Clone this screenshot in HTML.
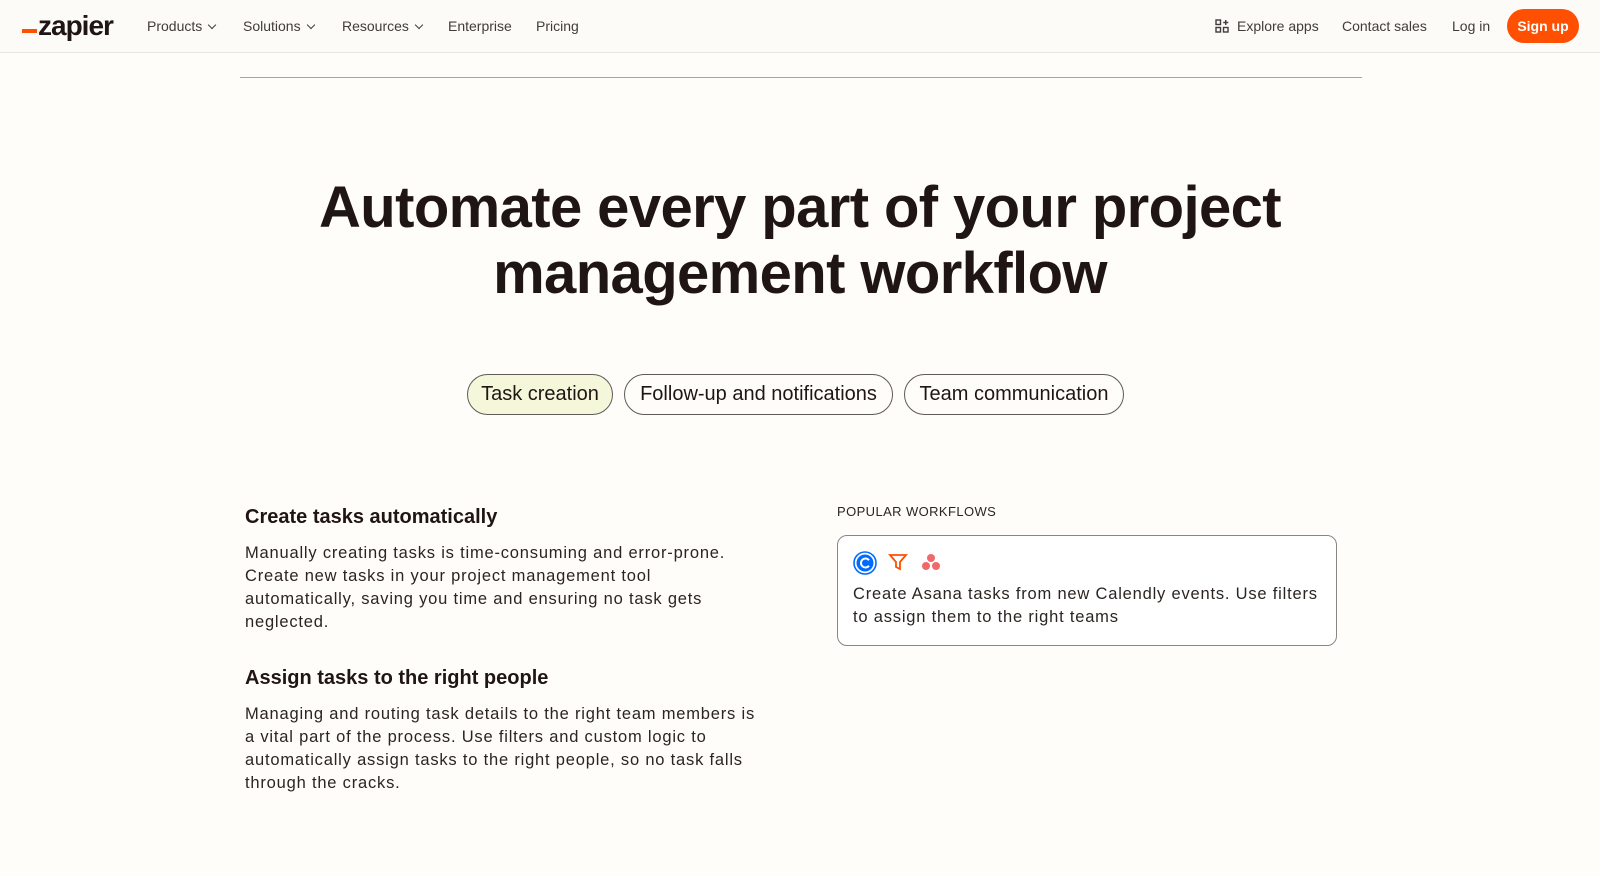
<!DOCTYPE html>
<html><head><meta charset="utf-8"><style>
*{margin:0;padding:0;box-sizing:border-box}
body{width:1600px;height:876px;background:#fffdf9;font-family:"Liberation Sans",Arial,sans-serif;color:#201515;position:relative;overflow:hidden}
.nav{position:absolute;left:0;top:0;width:1600px;height:53px;background:#fcfbf8;border-bottom:1px solid #e8e6e1}
.a{position:absolute;top:18px;font-size:14px;color:#403c3a}
.logo{position:absolute;left:22px;top:10px;font-size:28px;font-weight:bold;letter-spacing:-1px;color:#201515}
.logo span{display:inline-block;width:15px;height:4px;background:#ff4f00;vertical-align:2px;margin-right:1px}
.chev{display:inline-block;width:6px;height:6px;border-right:1.3px solid #403c3a;border-bottom:1.3px solid #403c3a;transform:rotate(45deg);margin-left:7px;vertical-align:3px}
.sign{position:absolute;left:1507px;top:9px;width:72px;height:34px;border-radius:17px;background:#ff4f00;color:#fff;font-weight:bold;font-size:14px;text-align:center;line-height:34px}
.hr{position:absolute;left:240px;top:77px;width:1122px;border-top:1.5px solid #a8a5a0}
h1{position:absolute;left:0;top:175px;width:1600px;text-align:center;font-size:58px;font-weight:bold;line-height:66px;letter-spacing:-0.6px;color:#201515}
.pill{position:absolute;top:374px;height:41px;border:1px solid #5e5a57;border-radius:21px;font-size:20px;line-height:39px;text-align:center;color:#201515}
h3{position:absolute;left:245px;font-size:20px;font-weight:bold;color:#201515}
p.t{position:absolute;left:245px;font-size:16.5px;line-height:23px;color:#2b2522;letter-spacing:.8px;white-space:nowrap}
.card{position:absolute;left:837px;top:535px;width:500px;height:111px;border:1px solid #8a8682;border-radius:10px;background:#fff}
</style></head><body>
<div class="nav">
<div class="logo"><span></span>zapier</div>
<div class="a" style="left:147px">Products<i class="chev"></i></div>
<div class="a" style="left:243px">Solutions<i class="chev"></i></div>
<div class="a" style="left:342px">Resources<i class="chev"></i></div>
<div class="a" style="left:448px">Enterprise</div>
<div class="a" style="left:536px">Pricing</div>
<svg style="position:absolute;left:1215px;top:19px" width="14" height="14" viewBox="0 0 14 14" fill="none" stroke="#403c3a" stroke-width="1.4"><rect x="1" y="1" width="4.5" height="4.5"/><rect x="1" y="8.5" width="4.5" height="4.5"/><rect x="8.5" y="8.5" width="4.5" height="4.5"/><path d="M10.75 1v5M8.25 3.5h5"/></svg>
<div class="a" style="left:1237px">Explore apps</div>
<div class="a" style="left:1342px">Contact sales</div>
<div class="a" style="left:1452px">Log in</div>
<div class="sign">Sign up</div>
</div>
<div class="hr"></div>
<h1>Automate every part of your project<br>management workflow</h1>
<div class="pill" style="left:467px;width:146px;background:#f4f7d9">Task creation</div>
<div class="pill" style="left:624px;width:269px">Follow-up and notifications</div>
<div class="pill" style="left:904px;width:220px">Team communication</div>
<h3 style="top:506px">Create tasks automatically</h3>
<p class="t" style="top:542px">Manually creating tasks is time-consuming and error-prone.<br>Create new tasks in your project management tool<br>automatically, saving you time and ensuring no task gets<br>neglected.</p>
<h3 style="top:667px">Assign tasks to the right people</h3>
<p class="t" style="top:703px">Managing and routing task details to the right team members is<br>a vital part of the process. Use filters and custom logic to<br>automatically assign tasks to the right people, so no task falls<br>through the cracks.</p>
<div style="position:absolute;left:837px;top:504px;font-size:13px;letter-spacing:.4px;color:#2b2522">POPULAR WORKFLOWS</div>
<div class="card">
<svg style="position:absolute;left:15px;top:15px" width="24" height="24" viewBox="0 0 24 24"><circle cx="12" cy="12" r="11" fill="none" stroke="#006bff" stroke-width="1.6"/><circle cx="12" cy="12" r="8.5" fill="#006bff"/><path d="M16 9.2A4.5 4.5 0 1 0 16 14.8" fill="none" stroke="#fff" stroke-width="2"/></svg>
<svg style="position:absolute;left:50px;top:16px" width="20" height="20" viewBox="0 0 20 20" fill="none" stroke="#ff4f00" stroke-width="1.8"><path d="M2 3h16l-6 7v7l-4-2v-5z"/></svg>
<svg style="position:absolute;left:83px;top:17px" width="20" height="18" viewBox="0 0 20 18" fill="#f06a6a"><circle cx="10" cy="5" r="4"/><circle cx="5" cy="13" r="4"/><circle cx="15" cy="13" r="4"/></svg>
<div style="position:absolute;left:15px;top:47px;font-size:16.5px;line-height:23px;color:#2b2522;letter-spacing:.8px;white-space:nowrap">Create Asana tasks from new Calendly events. Use filters<br>to assign them to the right teams</div>
</div>
</body></html>
